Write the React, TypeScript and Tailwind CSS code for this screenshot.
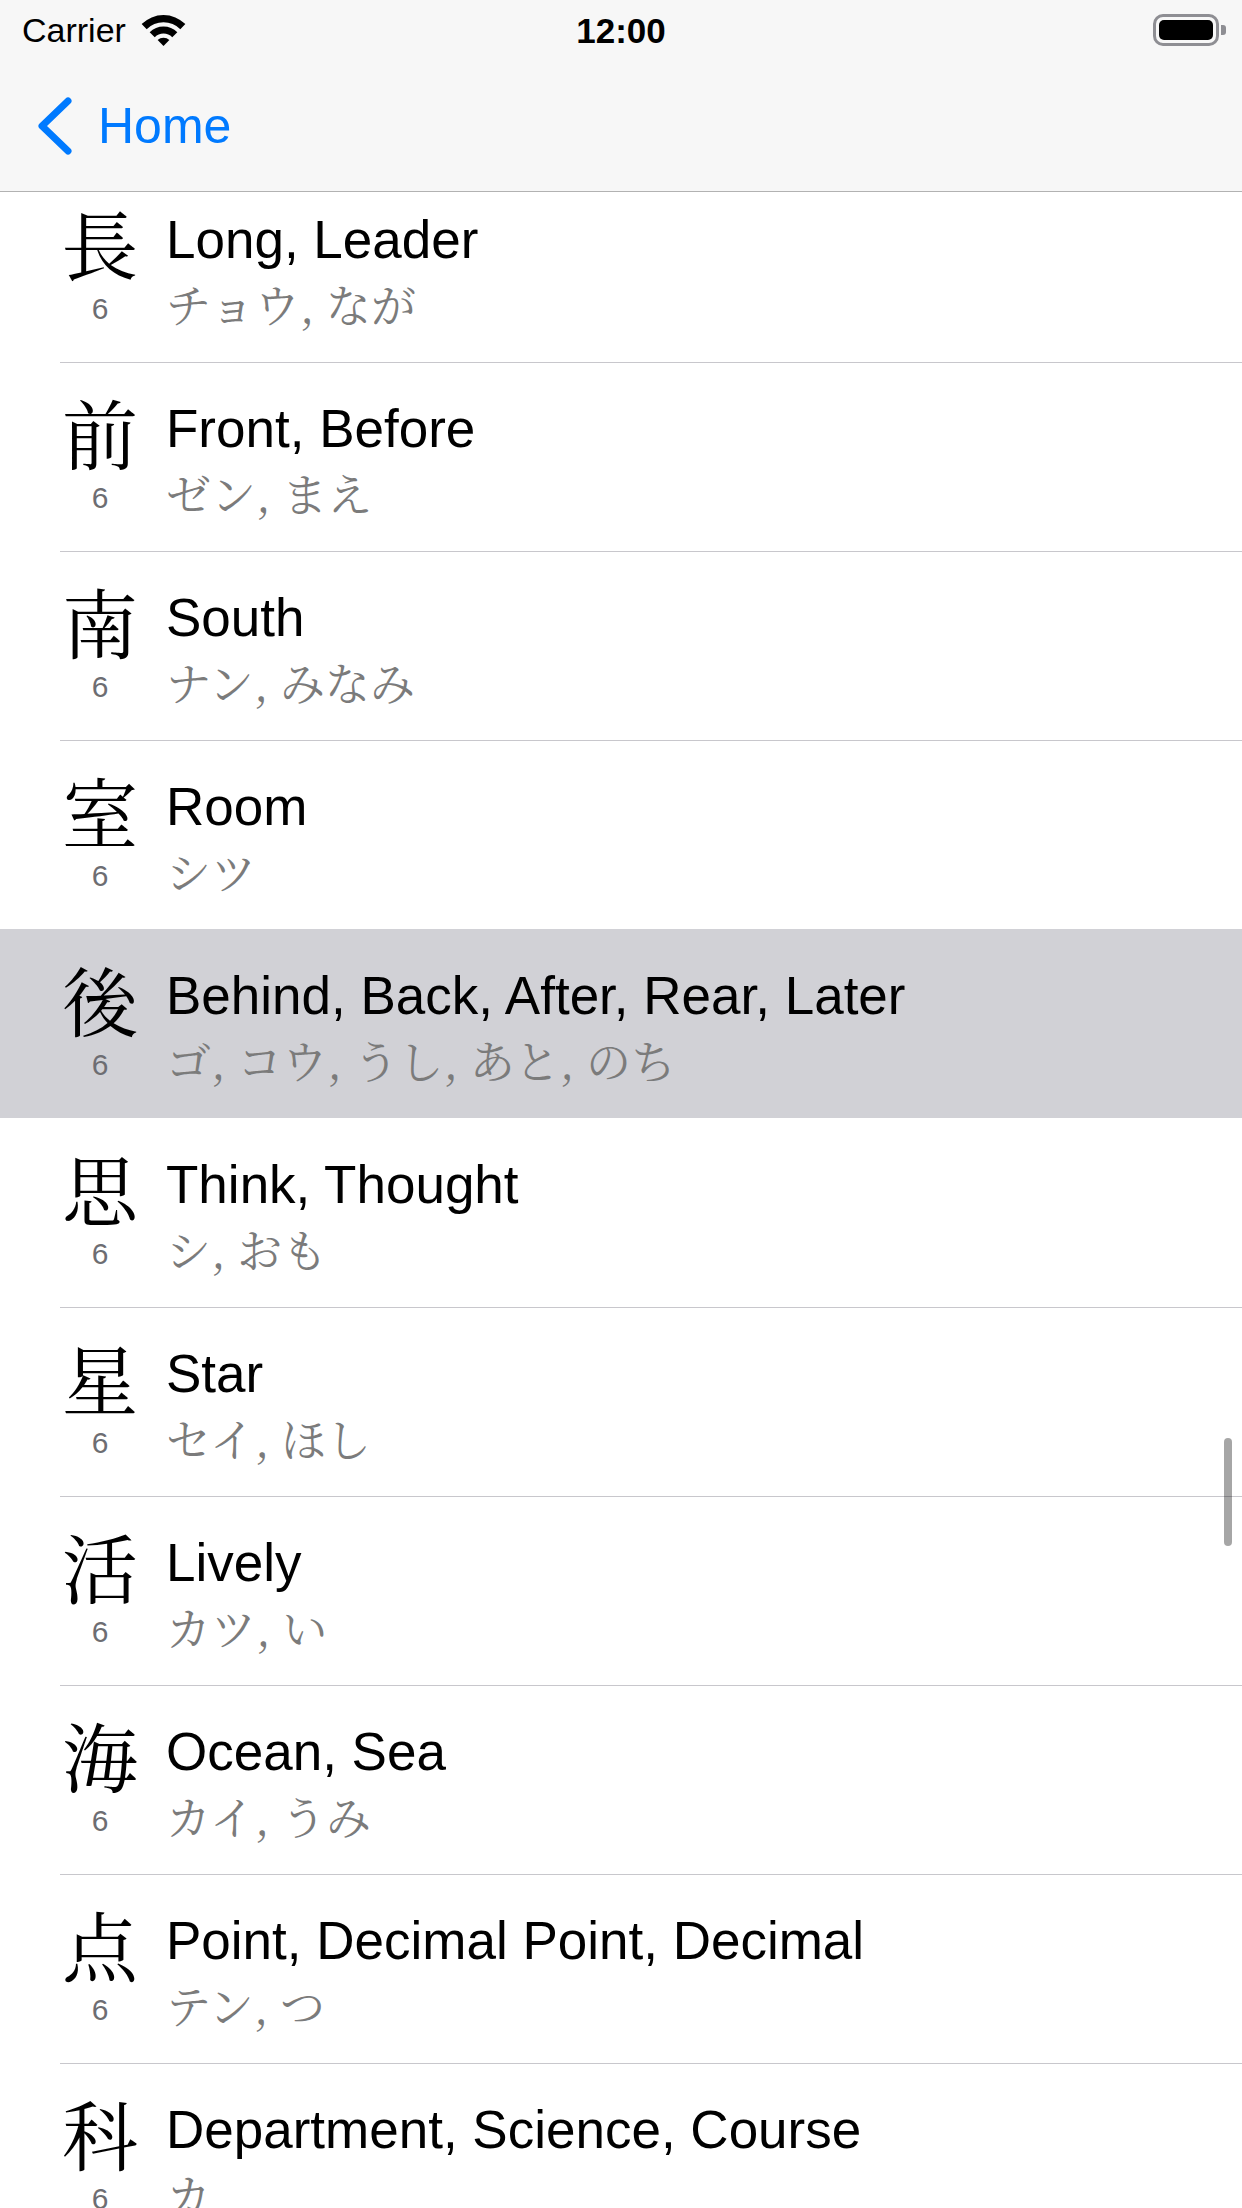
const kanjiList = [
  { kanji: '長', meaning: 'Long, Leader', reading: 'チョウ, なが' },
  { kanji: '前', meaning: 'Front, Before', reading: 'ゼン, まえ' },
  { kanji: '南', meaning: 'South', reading: 'ナン, みなみ' },
  { kanji: '室', meaning: 'Room', reading: 'シツ' },
  { kanji: '後', meaning: 'Behind, Back, After, Rear, Later', reading: 'ゴ, コウ, うし, あと, のち', selected: true },
  { kanji: '思', meaning: 'Think, Thought', reading: 'シ, おも' },
  { kanji: '星', meaning: 'Star', reading: 'セイ, ほし' },
  { kanji: '活', meaning: 'Lively', reading: 'カツ, い' },
  { kanji: '海', meaning: 'Ocean, Sea', reading: 'カイ, うみ' },
  { kanji: '点', meaning: 'Point, Decimal Point, Decimal', reading: 'テン, つ' },
  { kanji: '科', meaning: 'Department, Science, Course', reading: 'カ' },
]

const sans = 'font-["Liberation_Sans",Arial,sans-serif]'
const jp = 'font-["Noto_Serif_CJK_JP","Noto_Sans_CJK_JP",serif]'

const StatusBar = () => {
  return (
    <div className={`grid h-[60px] grid-cols-[1fr_auto_1fr] items-center bg-[#f7f7f7] ${sans}`}>
      <div className="flex items-center pl-[22px]">
        <span className="text-[34px] leading-none text-black">Carrier</span>
        <svg className="ml-[14px]" width="47" height="33" viewBox="0 0 45 32">
          <path d="M1.3 9.8 A30 30 0 0 1 43.7 9.8 L38.8 14.7 A23 23 0 0 0 6.2 14.7 Z" fill="black" />
          <path d="M9.1 17.6 A19 19 0 0 1 35.9 17.6 L31 22.5 A12 12 0 0 0 14 22.5 Z" fill="black" />
          <path d="M16.8 25.3 A8 8 0 0 1 28.2 25.3 L22.5 31 Z" fill="black" />
        </svg>
      </div>
      <span className="text-[35px] font-bold leading-none text-black">12:00</span>
      <div className="flex items-center justify-end pr-[16px]">
        <div className="h-[32px] w-[66px] rounded-[10px] border-[3px] border-[#8e8e93] p-[3px]">
          <div className="h-full w-full rounded-[5px] bg-black" />
        </div>
        <div className="ml-[2px] h-[10px] w-[5px] rounded-r-[3px] bg-[#8e8e93]" />
      </div>
    </div>
  )
}

const NavBar = () => {
  return (
    <div className="flex h-[132px] items-center border-b border-[#b2b2b2] bg-[#f7f7f7] pl-[37px]">
      <svg width="36" height="58" viewBox="0 0 36 58">
        <polyline
          points="31,4 5,29 31,54"
          fill="none"
          stroke="#007aff"
          strokeWidth="7"
          strokeLinecap="round"
          strokeLinejoin="round"
        />
      </svg>
      <span className={`ml-[25px] text-[50px] leading-none text-[#007aff] ${sans}`}>Home</span>
    </div>
  )
}

const KanjiRow = ({
  kanji,
  meaning,
  reading,
  selected,
  hideBorder,
}: {
  kanji: string
  meaning: string
  reading: string
  selected?: boolean
  hideBorder?: boolean
}) => {
  return (
    <div className={`h-[189px] ${selected ? 'bg-[#d1d1d6]' : 'bg-white'}`}>
      <div
        className={`ml-[60px] flex h-full border-t ${
          hideBorder ? 'border-transparent' : 'border-[#c8c7cc]'
        }`}
      >
        <div className="flex w-[80px] flex-col items-center pt-[31px]">
          <span className={`text-[76px] leading-none text-black ${jp}`}>{kanji}</span>
          <span className={`mt-[13px] text-[30px] leading-none text-[#6d6d72] ${sans}`}>6</span>
        </div>
        <div className="ml-[26px] flex flex-col pt-[39px]">
          <span className={`whitespace-nowrap text-[53px] leading-none text-black ${sans}`}>
            {meaning}
          </span>
          <span className={`mt-[15px] whitespace-nowrap text-[45px] leading-none text-[#7b7b7b] ${jp}`}>
            {reading}
          </span>
        </div>
      </div>
    </div>
  )
}

const App = () => {
  return (
    <div className="relative flex h-[2208px] w-[1242px] flex-col overflow-hidden bg-white">
      <StatusBar />
      <NavBar />
      <div className="min-h-0 flex-1 overflow-hidden">
        <div className="-mt-[19px]">
          {kanjiList.map((item, i) => (
            <KanjiRow
              key={item.kanji}
              {...item}
              hideBorder={item.selected || kanjiList[i - 1]?.selected}
            />
          ))}
        </div>
      </div>
      <div className="absolute left-[1224px] top-[1438px] h-[108px] w-[8px] rounded-full bg-black/35" />
    </div>
  )
}

export default App
